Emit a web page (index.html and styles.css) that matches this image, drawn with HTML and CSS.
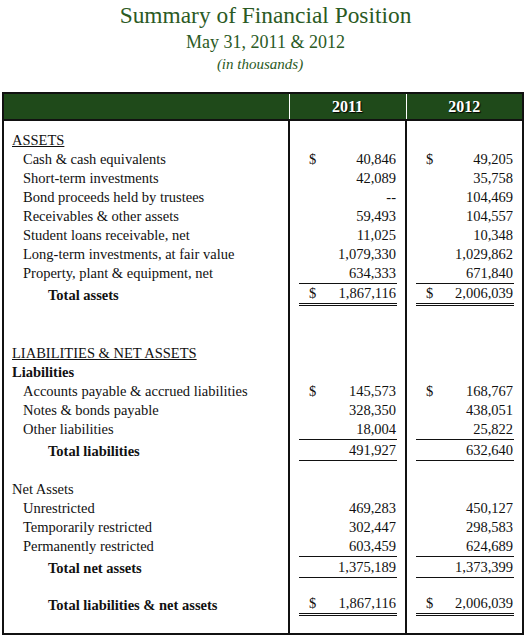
FILE: index.html
```html
<!DOCTYPE html>
<html lang="en">

<head>
    <meta charset="UTF-8">
    <title>Summary of Financial Position</title>
    <link rel="stylesheet" href="styles.css">
</head>

<body>
    <div class="heading">
        <h1 class="title">Summary of Financial Position</h1>
        <div class="subtitle">May 31, 2011 &amp; 2012</div>
        <div class="note">(in thousands)</div>
    </div>

    <table class="fin">
        <colgroup>
            <col class="c-label">
            <col class="c-num">
            <col class="c-num">
        </colgroup>
        <thead>
            <tr>
                <th></th>
                <th>2011</th>
                <th>2012</th>
            </tr>
        </thead>
        <tbody>
            <tr class="gap-top"><td></td><td></td><td></td></tr>
            <tr>
                <td class="sect"><u>ASSETS</u></td><td></td><td></td>
            </tr>
            <tr>
                <td class="item">Cash &amp; cash equivalents</td>
                <td><div class="amt"><span>$</span><span>40,846</span></div></td>
                <td><div class="amt"><span>$</span><span>49,205</span></div></td>
            </tr>
            <tr>
                <td class="item">Short-term investments</td>
                <td><div class="amt"><span></span><span>42,089</span></div></td>
                <td><div class="amt"><span></span><span>35,758</span></div></td>
            </tr>
            <tr>
                <td class="item">Bond proceeds held by trustees</td>
                <td><div class="amt"><span></span><span>--</span></div></td>
                <td><div class="amt"><span></span><span>104,469</span></div></td>
            </tr>
            <tr>
                <td class="item">Receivables &amp; other assets</td>
                <td><div class="amt"><span></span><span>59,493</span></div></td>
                <td><div class="amt"><span></span><span>104,557</span></div></td>
            </tr>
            <tr>
                <td class="item">Student loans receivable, net</td>
                <td><div class="amt"><span></span><span>11,025</span></div></td>
                <td><div class="amt"><span></span><span>10,348</span></div></td>
            </tr>
            <tr>
                <td class="item">Long-term investments, at fair value</td>
                <td><div class="amt"><span></span><span>1,079,330</span></div></td>
                <td><div class="amt"><span></span><span>1,029,862</span></div></td>
            </tr>
            <tr>
                <td class="item">Property, plant &amp; equipment, net</td>
                <td><div class="amt line"><span></span><span>634,333</span></div></td>
                <td><div class="amt line"><span></span><span>671,840</span></div></td>
            </tr>
            <tr class="total">
                <td class="tot">Total assets</td>
                <td><div class="amt dbl"><span>$</span><span>1,867,116</span></div></td>
                <td><div class="amt dbl"><span>$</span><span>2,006,039</span></div></td>
            </tr>

            <tr class="gap-big"><td></td><td></td><td></td></tr>

            <tr>
                <td class="sect"><u>LIABILITIES &amp; NET ASSETS</u></td><td></td><td></td>
            </tr>
            <tr>
                <td class="sect"><b>Liabilities</b></td><td></td><td></td>
            </tr>
            <tr>
                <td class="item">Accounts payable &amp; accrued liabilities</td>
                <td><div class="amt"><span>$</span><span>145,573</span></div></td>
                <td><div class="amt"><span>$</span><span>168,767</span></div></td>
            </tr>
            <tr>
                <td class="item">Notes &amp; bonds payable</td>
                <td><div class="amt"><span></span><span>328,350</span></div></td>
                <td><div class="amt"><span></span><span>438,051</span></div></td>
            </tr>
            <tr>
                <td class="item">Other liabilities</td>
                <td><div class="amt line"><span></span><span>18,004</span></div></td>
                <td><div class="amt line"><span></span><span>25,822</span></div></td>
            </tr>
            <tr class="total">
                <td class="tot">Total liabilities</td>
                <td><div class="amt line"><span></span><span>491,927</span></div></td>
                <td><div class="amt line"><span></span><span>632,640</span></div></td>
            </tr>

            <tr class="gap-mid"><td></td><td></td><td></td></tr>

            <tr>
                <td class="sect">Net Assets</td><td></td><td></td>
            </tr>
            <tr>
                <td class="item">Unrestricted</td>
                <td><div class="amt"><span></span><span>469,283</span></div></td>
                <td><div class="amt"><span></span><span>450,127</span></div></td>
            </tr>
            <tr>
                <td class="item">Temporarily restricted</td>
                <td><div class="amt"><span></span><span>302,447</span></div></td>
                <td><div class="amt"><span></span><span>298,583</span></div></td>
            </tr>
            <tr>
                <td class="item">Permanently restricted</td>
                <td><div class="amt line"><span></span><span>603,459</span></div></td>
                <td><div class="amt line"><span></span><span>624,689</span></div></td>
            </tr>
            <tr class="total">
                <td class="tot">Total net assets</td>
                <td><div class="amt line"><span></span><span>1,375,189</span></div></td>
                <td><div class="amt line"><span></span><span>1,373,399</span></div></td>
            </tr>

            <tr class="gap-sm"><td></td><td></td><td></td></tr>

            <tr class="total">
                <td class="tot">Total liabilities &amp; net assets</td>
                <td><div class="amt dbl"><span>$</span><span>1,867,116</span></div></td>
                <td><div class="amt dbl"><span>$</span><span>2,006,039</span></div></td>
            </tr>
            <tr class="gap-end"><td></td><td></td><td></td></tr>
        </tbody>
    </table>
</body>

</html>
```

FILE: styles.css
```css
body {
    margin: 0;
    background: #fff;
    font-family: "Liberation Serif", "Times New Roman", serif;
    color: #111;
}

.heading {
    text-align: center;
    color: #2b5a24;
    padding: 2px 0 0 6px;
    height: 90px;
}

.title {
    margin: 0;
    font-size: 23.4px;
    font-weight: normal;
    line-height: 26px;
}

.subtitle {
    font-size: 18px;
    line-height: 22px;
    margin-top: 3px;
}

/* slightly left of the other two lines in the original */
.note {
    font-size: 15px;
    font-style: italic;
    line-height: 18px;
    margin: 2px 0 0 -11px;
}

.fin {
    margin-left: 2px;
    width: 520px;
    border-collapse: collapse;
    border: 2px solid #111;
    font-size: 14.5px;
    table-layout: fixed;
}

.c-label {
    width: 286px;
}

.c-num {
    width: 117px;
}

.fin th {
    height: 25px;
    padding: 0;
    background: #1f4a1a;
    color: #fff;
    font-size: 16px;
    font-weight: bold;
    text-shadow: 1px 1px 1px #000;
    border-bottom: 2px solid #111;
    border-left: 1px solid #fff;
}

.fin th:first-child {
    border-left: none;
}

.fin td {
    padding: 0;
    height: 19px;
    line-height: 19px;
    border-left: 2px solid #111;
    vertical-align: middle;
}

.fin td:first-child {
    border-left: none;
}

.sect {
    padding-left: 8px !important;
}

.item {
    padding-left: 19px !important;
}

.tot {
    padding-left: 44px !important;
    font-weight: bold;
}

.fin .total td {
    height: 23px;
}

.amt {
    display: flex;
    justify-content: space-between;
    margin: 0 8px 0 9px;
    padding: 0 1px 0 10px;
}

.line {
    border-bottom: 1px solid #111;
}

.dbl {
    border-bottom: 3px double #111;
}

.fin .gap-top td {
    height: 9.5px;
}

.fin .gap-big td {
    height: 37px;
}

.fin .gap-mid td {
    height: 17px;
}

.fin .gap-sm td {
    height: 14px;
}

.fin .gap-end td {
    height: 16px;
}
```
